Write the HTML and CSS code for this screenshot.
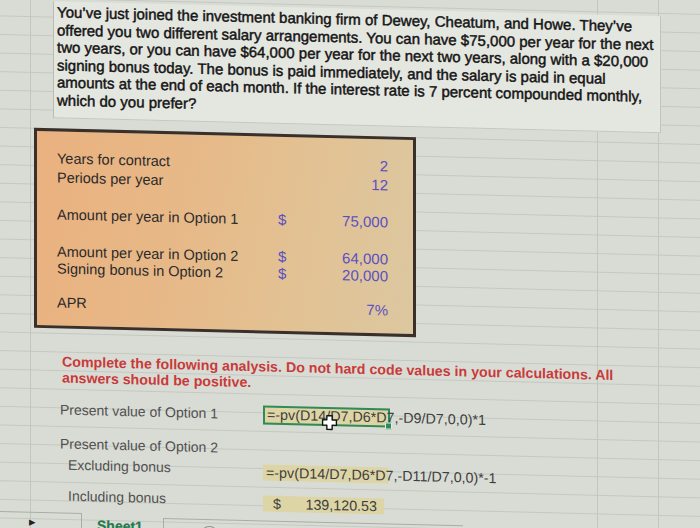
FILE: index.html
```html
<!DOCTYPE html>
<html lang="en">
<head>
<meta charset="utf-8">
<title>Dewey, Cheatum, and Howe</title>
<link rel="stylesheet" href="styles.css">
</head>
<body>
<div class="page">
  <section class="intro">
    <div class="line">You’ve just joined the investment banking firm of Dewey, Cheatum, and Howe. They’ve</div>
    <div class="line">offered you two different salary arrangements. You can have $75,000 per year for the next</div>
    <div class="line">two years, or you can have $64,000 per year for the next two years, along with a $20,000</div>
    <div class="line">signing bonus today. The bonus is paid immediately, and the salary is paid in equal</div>
    <div class="line">amounts at the end of each month. If the interest rate is 7 percent compounded monthly,</div>
    <div class="line">which do you prefer?</div>
  </section>

  <section class="inputs">
    <div class="row r-years"><span class="lbl">Years for contract</span><span class="cur"></span><span class="val">2</span></div>
    <div class="row r-periods"><span class="lbl">Periods per year</span><span class="cur"></span><span class="val">12</span></div>
    <div class="row r-opt1"><span class="lbl">Amount per year in Option 1</span><span class="cur">$</span><span class="val">75,000</span></div>
    <div class="row r-opt2"><span class="lbl">Amount per year in Option 2</span><span class="cur">$</span><span class="val">64,000</span></div>
    <div class="row r-bonus"><span class="lbl">Signing bonus in Option 2</span><span class="cur">$</span><span class="val">20,000</span></div>
    <div class="row r-apr"><span class="lbl">APR</span><span class="cur"></span><span class="val">7%</span></div>
  </section>

  <section class="note">
    <div class="line">Complete the following analysis. Do not hard code values in your calculations. All</div>
    <div class="line">answers should be positive.</div>
  </section>

  <section class="analysis">
    <div class="arow a-pv1">
      <span class="alabel">Present value of Option 1</span>
      <div class="cell selected">
        <span class="ftext">=-pv(D14/D7,D6*D7,-D9/D7,0,0)*1</span>
        <span class="handle"></span>
        <svg class="cursor" width="17" height="17" viewBox="0 0 16 16"><path d="M5.5 1.5h5v4h4v5h-4v4h-5v-4h-4v-5h4z" fill="#fff" stroke="#111" stroke-width="1.3" stroke-linejoin="round"/></svg>
      </div>
    </div>
    <div class="arow a-pv2"><span class="alabel">Present value of Option 2</span></div>
    <div class="arow a-excl">
      <span class="alabel sub">Excluding bonus</span>
      <div class="cell hl"><span class="ftext">=-pv(D14/D7,D6*D7,-D11/D7,0,0)*-1</span></div>
    </div>
    <div class="arow a-incl">
      <span class="alabel sub">Including bonus</span>
      <div class="cell hl money"><span class="dollar">$</span><span class="amt">139,120.53</span></div>
    </div>
  </section>

  <footer class="tabs">
    <div class="nav"><span class="arrow">▸</span></div>
    <div class="sheet">Sheet1</div>
    <div class="addbox"><span class="addbtn"></span></div>
  </footer>
</div>
</body>
</html>
```

FILE: styles.css
```css
html, body {
  margin: 0;
  padding: 0;
}
body {
  width: 700px;
  height: 528px;
  overflow: hidden;
  background: #d8dbd4;
  font-family: "Liberation Sans", Arial, sans-serif;
}
.page {
  width: 720px;
  height: 600px;
  margin-top: -24px;
  padding-top: 24px;
  box-sizing: border-box;
  transform: skewY(1.4deg);
  transform-origin: 0 0;
  background-color: #d9dcd5;
  background-image:
    linear-gradient(to right,
      transparent 30px, #c2c6be 30px, #c2c6be 31px, transparent 31px,
      transparent 597px, #c2c6be 597px, #c2c6be 598px, transparent 598px,
      transparent 658px, #c2c6be 658px, #c2c6be 659px, transparent 659px),
    linear-gradient(to bottom, #c4c8c0 1px, transparent 1px);
  background-size: 100% 100%, 100% 18.6px;
  background-position: 0 0, 0 2.2px;
}

/* intro text cell */
.intro {
  margin-left: 53px;
  width: 608px;
  height: 117px;
  box-sizing: border-box;
  padding: 2px 0 0 3px;
  background: #e4e6e0;
  border-left: 1px solid #b8bcb4;
  border-right: 1px solid #c0c4bc;
  border-bottom: 1px solid #c4c8c0;
  color: #141414;
  font-size: 15px;
  line-height: 17.6px;
  -webkit-text-stroke: 0.45px #141414;
}
.line {
  white-space: nowrap;
}

/* orange inputs block */
.inputs {
  margin-top: 10px;
  margin-left: 34px;
  width: 382px;
  height: 200px;
  box-sizing: border-box;
  padding: 18px 25px 0 20px;
  border: 3px solid #3a2f29;
  background: linear-gradient(100deg, #eab17f 0%, #e7b988 40%, #e2c294 70%, #dcc7a0 100%);
  font-size: 14.5px;
  color: #2a2a2a;
}
.row {
  display: grid;
  grid-template-columns: 221px 20px 1fr;
  height: 18px;
  line-height: 18px;
  white-space: nowrap;
}
.cur, .val {
  color: #5a4fc3;
  font-size: 15px;
}
.val {
  text-align: right;
}
.r-periods { margin-top: 1px; }
.r-opt1 { margin-top: 18.5px; }
.r-opt2 { margin-top: 19px; }
.r-bonus { margin-top: -1px; }
.r-apr { margin-top: 16px; }

/* red instructions */
.note {
  margin-top: 25px;
  margin-left: 62px;
  color: #c93a3a;
  font-size: 14.2px;
  font-weight: bold;
  line-height: 16px;
}

/* analysis */
.analysis {
  margin-left: 60px;
  font-size: 14px;
  color: #505050;
}
.arow {
  display: grid;
  grid-template-columns: 203px auto;
  align-items: center;
  height: 19px;
  line-height: 19px;
  white-space: nowrap;
}
.a-pv1 { margin-top: 15px; }
.a-pv2 { margin-top: 15.4px; }
.a-excl { margin-top: 0; }
.a-incl { margin-top: 13.5px; }
.sub {
  padding-left: 8px;
}
.cell {
  position: relative;
  box-sizing: border-box;
  color: #3e3e3e;
  overflow: visible;
  font-size: 14.3px;
}
.selected {
  width: 127px;
  height: 19px;
  line-height: 15px;
  border: 2px solid #2f8a5c;
  background: #ddd5a4;
  padding-left: 2px;
}
.hl {
  width: 125px;
  height: 16px;
  line-height: 16px;
  background: #ddd5a6;
  padding-left: 3px;
  margin-top: 6px;
}
.ftext {
  white-space: nowrap;
}
.handle {
  position: absolute;
  right: -4px;
  bottom: -4px;
  width: 5px;
  height: 5px;
  background: #2f8a5c;
  border: 1px solid #e6e8e2;
}
.cursor {
  position: absolute;
  left: 56px;
  top: 5px;
}
.money {
  width: 121px;
  display: flex;
  justify-content: space-between;
  padding: 0 7px 0 10px;
  margin-top: 4px;
}

/* sheet tabs */
.tabs {
  margin-top: 7px;
  display: flex;
  align-items: flex-start;
  height: 24px;
}
.nav {
  width: 82px;
  height: 24px;
  box-sizing: border-box;
  border-top: 1px solid #a9ada5;
  border-right: 1px solid #a9ada5;
  padding-left: 29px;
  padding-top: 2px;
  color: #222;
  font-size: 13px;
  line-height: 14px;
}
.sheet {
  margin-left: 15px;
  margin-top: 4px;
  width: 66px;
  color: #227a4c;
  font-weight: bold;
  font-size: 14px;
  line-height: 16px;
  -webkit-text-stroke: 0.2px #227a4c;
}
.addbox {
  margin-top: 3px;
  width: 300px;
  height: 24px;
  box-sizing: border-box;
  border-top: 1px solid #a9ada5;
  border-left: 1px solid #a9ada5;
  padding-left: 36px;
  padding-top: 6px;
}
.addbtn {
  display: block;
  width: 17px;
  height: 17px;
  border: 1px solid #8e928a;
  border-radius: 50%;
}
```
